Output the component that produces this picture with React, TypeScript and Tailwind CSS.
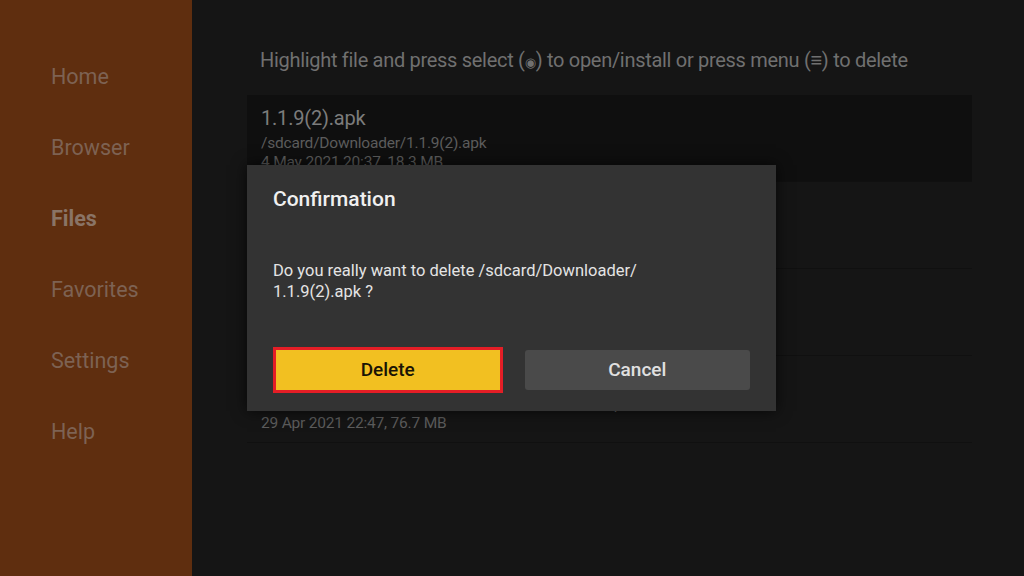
import { FC } from 'react';

const navItems = ['Home', 'Browser', 'Files', 'Favorites', 'Settings', 'Help'];

const files = [
    { name: '1.1.9(2).apk', path: '/sdcard/Downloader/1.1.9(2).apk', meta: '4 May 2021 20:37, 18.3 MB' },
    { name: '1.1.9(1).apk', path: '/sdcard/Downloader/1.1.9(1).apk', meta: '4 May 2021 20:31, 18.3 MB' },
    { name: '1.1.9.apk', path: '/sdcard/Downloader/1.1.9.apk', meta: '4 May 2021 20:25, 18.3 MB' },
    { name: 'kodi-19.0-Matrix-armeabi-v7a.apk', path: '/sdcard/Downloader/kodi-19.0-Matrix-armeabi-v7a.apk', meta: '29 Apr 2021 22:47, 76.7 MB' },
];

const App: FC = () => {
    return (
        <div className="w-[1024px] h-[576px] flex bg-[#151515] overflow-hidden font-['Roboto',sans-serif]">
            {/* Sidebar */}
            <div className="w-[192px] shrink-0 bg-[#5f2e0f] flex flex-col pt-[42px]">
                {navItems.map((item) => (
                    <div
                        key={item}
                        className={`h-[71px] flex items-center pl-[51px] text-[21.5px] ${
                            item === 'Files' ? 'font-bold text-[#8a7466]' : 'text-[#7d6253]'
                        }`}
                    >
                        {item}
                    </div>
                ))}
            </div>

            {/* Main */}
            <div className="flex-1 relative pl-[55px] pr-[52px]">
                <div className="h-[95px] pt-[47px] pl-[13px] text-[20px] leading-[26px] text-[#707070] tracking-[-0.3px] whitespace-nowrap">
                    Highlight file and press select (<span className="text-[13px] font-['DejaVu_Sans',sans-serif]">◉</span>) to open/install or press menu (≡) to delete
                </div>

                {files.map((f, i) => (
                    <div
                        key={f.name}
                        className={`h-[87px] pl-[14px] pt-[11px] border-b border-[#101010] tracking-[-0.2px] ${
                            i === 0 ? 'bg-[#0f0f0f]' : ''
                        }`}
                    >
                        <div className="text-[20px] leading-[25px] text-[#7c7c7c] mb-[3px]">{f.name}</div>
                        <div className="text-[15.5px] leading-[19px] text-[#5c5c5c]">{f.path}</div>
                        <div className="text-[15.5px] leading-[19px] text-[#5c5c5c]">{f.meta}</div>
                    </div>
                ))}

                {/* Dialog */}
                <div className="absolute left-[55px] top-[165px] w-[529px] h-[246px] bg-[#333333] shadow-[0_0_14px_rgba(0,0,0,0.7)] px-[26px] pt-[21px] flex flex-col">
                    <div className="text-[21px] leading-[26px] font-medium text-[#f0f0f0]">Confirmation</div>
                    <div className="mt-[48px] text-[16.5px] leading-[21px] text-[#e4e4e4]">
                        Do you really want to delete /sdcard/Downloader/
                        <br />
                        1.1.9(2).apk ?
                    </div>
                    <div className="mt-[45px] flex items-center gap-[22px]">
                        <div className="w-[230px] h-[46px] border-[3px] border-[#e41e26] bg-[#f2c021] flex items-center justify-center text-[19px] font-medium text-[#1a1405]">
                            Delete
                        </div>
                        <div className="w-[226px] h-[40px] rounded-[3px] bg-[#4a4a4a] flex items-center justify-center text-[19px] font-medium text-[#e0e0e0]">
                            Cancel
                        </div>
                    </div>
                </div>
            </div>
        </div>
    );
};

export default App;
